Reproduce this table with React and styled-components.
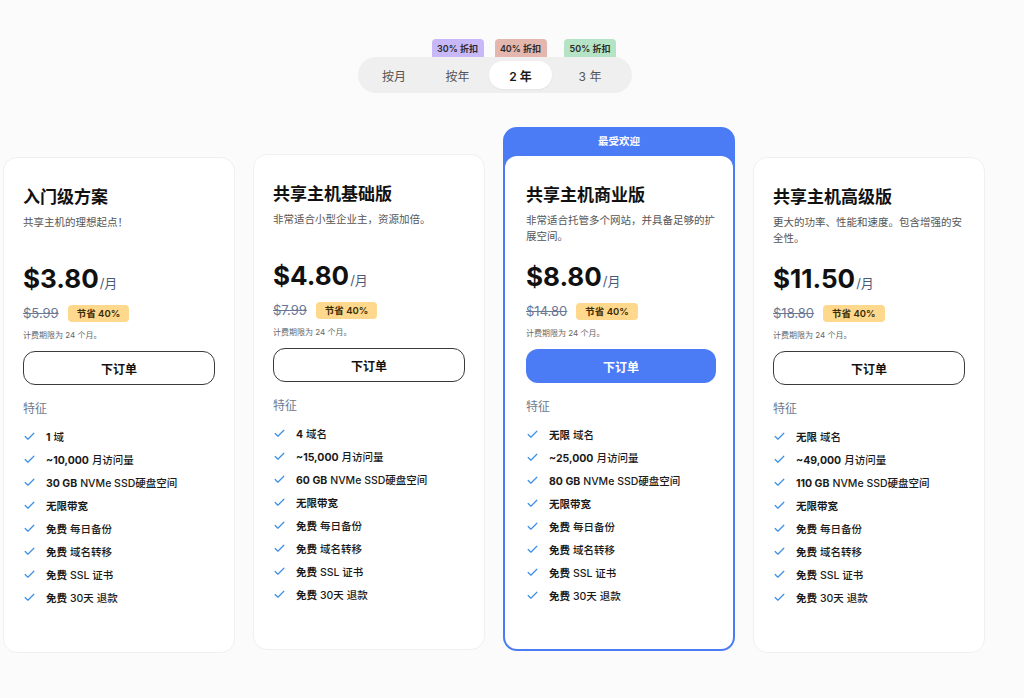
import React from "react";
import styled, { createGlobalStyle } from "styled-components";

const Global = createGlobalStyle`
  html, body { margin: 0; padding: 0; background: #fbfbfb; }
  body { font-family: Inter, "Noto Sans CJK SC", sans-serif; color: #111; }
  * { box-sizing: border-box; }
`;

const Page = styled.div`
  width: 982px;
  margin-left: 3px;
  padding-top: 57px;
  padding-bottom: 45px;
`;

const ToggleWrap = styled.div`
  display: flex;
  justify-content: center;
`;

const Toggle = styled.div`
  display: flex;
  padding: 4px;
  height: 36px;
  border-radius: 18px;
  background: #efefef;
  transform: translateX(1px);
`;

const ToggleItem = styled.div`
  position: relative;
  width: ${(p) => p.$w}px;
  display: flex;
  align-items: center;
  justify-content: center;
  border-radius: 15px;
  font-size: 12px;
  font-weight: ${(p) => (p.$active ? 600 : 400)};
  color: ${(p) => (p.$active ? "#1a1a1a" : "#555")};
  background: ${(p) => (p.$active ? "#fff" : "transparent")};
  box-shadow: ${(p) => (p.$active ? "0 1px 2px rgba(0,0,0,0.05)" : "none")};
`;

const Discount = styled.span`
  position: absolute;
  top: -22px;
  left: 50%;
  transform: translateX(-50%);
  width: 52px;
  height: 18px;
  display: flex;
  align-items: center;
  justify-content: center;
  border-radius: 4px 4px 0 0;
  background: ${(p) => p.$bg};
  font-size: 9px;
  font-weight: 600;
  color: #2b2b2b;
  white-space: nowrap;
`;

const Cards = styled.div`
  display: grid;
  grid-template-columns: repeat(4, 232px);
  gap: 18px;
  margin-top: 34px;
  align-items: start;
`;

const Card = styled.div`
  margin-top: ${(p) => p.$top}px;
  height: 496px;
  background: #fff;
  border: 1px solid #f0f0f0;
  border-radius: 14px;
  padding: 27px 19px;
`;

const Featured = styled.div`
  height: 524px;
  background: #4b7cf6;
  border-radius: 14px;
  padding: 0 2px 2px;
  display: flex;
  flex-direction: column;
`;

const Banner = styled.div`
  height: 29px;
  padding-bottom: 2px;
  display: flex;
  align-items: center;
  justify-content: center;
  color: #fff;
  font-size: 10.5px;
  font-weight: 600;
`;

const Inner = styled.div`
  flex: 1;
  background: #fff;
  border-radius: 12px;
  padding: 27px 17px 27px 21px;
`;

const Title = styled.h2`
  margin: 0;
  font-size: 17px;
  line-height: 24px;
  font-weight: 700;
  color: #111;
`;

const Sub = styled.p`
  margin: 6px 0 0;
  min-height: 32px;
  font-size: 10.5px;
  line-height: 16px;
  color: #555;
`;

const PriceRow = styled.div`
  margin-top: 14px;
  display: flex;
  align-items: baseline;
  height: 36px;
`;

const Price = styled.span`
  font-size: 26px;
  font-weight: 700;
  line-height: 36px;
  color: #111;
`;

const Per = styled.span`
  font-size: 13px;
  color: #4a5b7a;
  margin-left: 1px;
`;

const OldRow = styled.div`
  margin-top: 6px;
  height: 20px;
  display: flex;
  align-items: center;
  gap: 9px;
`;

const Old = styled.span`
  font-size: 13px;
  color: #6b7894;
  text-decoration: line-through;
`;

const Save = styled.span`
  height: 17px;
  padding: 0 9px;
  display: flex;
  align-items: center;
  border-radius: 4px;
  background: #fdd88d;
  font-size: 9.5px;
  font-weight: 600;
  color: #3a2c05;
`;

const Billing = styled.div`
  margin-top: 6px;
  font-size: 8px;
  line-height: 12px;
  color: #666;
`;

const OrderButton = styled.button`
  margin-top: 10px;
  width: 100%;
  height: 34px;
  border-radius: 12px;
  border: ${(p) => (p.$primary ? "none" : "1px solid #3a3a3a")};
  background: ${(p) => (p.$primary ? "#4b7cf6" : "#fff")};
  color: ${(p) => (p.$primary ? "#fff" : "#111")};
  font-family: inherit;
  font-size: 12px;
  font-weight: 600;
`;

const FeatHead = styled.div`
  margin-top: 15px;
  font-size: 12px;
  line-height: 18px;
  color: #6b7a90;
`;

const List = styled.ul`
  list-style: none;
  margin: 7px 0 0;
  padding: 0;
`;

const Item = styled.li`
  height: 23px;
  display: flex;
  align-items: center;
  gap: 10px;
  font-size: 10.5px;
  font-weight: 500;
  color: #1a1a1a;
`;

const B = styled.b`
  font-weight: 700;
  margin-right: 3px;
`;

const Tick = () => (
  <svg width="13" height="13" viewBox="0 0 24 24" fill="none" stroke="#3b8fe6" strokeWidth="2.2" strokeLinecap="round" strokeLinejoin="round">
    <path d="M20 6 9 17l-5-5" />
  </svg>
);

const plans = [
  { title: "入门级方案", sub: "共享主机的理想起点！", price: "$3.80", old: "$5.99", dom: ["1", "域"], visits: "~10,000", disk: "30 GB", top: 30 },
  { title: "共享主机基础版", sub: "非常适合小型企业主，资源加倍。", price: "$4.80", old: "$7.99", dom: ["4", "域名"], visits: "~15,000", disk: "60 GB", top: 27 },
  { title: "共享主机商业版", sub: "非常适合托管多个网站，并具备足够的扩展空间。", price: "$8.80", old: "$14.80", dom: ["无限", "域名"], visits: "~25,000", disk: "80 GB", featured: true },
  { title: "共享主机高级版", sub: "更大的功率、性能和速度。包含增强的安全性。", price: "$11.50", old: "$18.80", dom: ["无限", "域名"], visits: "~49,000", disk: "110 GB", top: 30 },
];

const Body = ({ p }) => (
  <>
    <Title>{p.title}</Title>
    <Sub>{p.sub}</Sub>
    <PriceRow>
      <Price>{p.price}</Price>
      <Per>/月</Per>
    </PriceRow>
    <OldRow>
      <Old>{p.old}</Old>
      <Save>节省 40%</Save>
    </OldRow>
    <Billing>计费期限为 24 个月。</Billing>
    <OrderButton $primary={p.featured}>下订单</OrderButton>
    <FeatHead>特征</FeatHead>
    <List>
      <Item><Tick /><span><B>{p.dom[0]}</B>{p.dom[1]}</span></Item>
      <Item><Tick /><span><B>{p.visits}</B>月访问量</span></Item>
      <Item><Tick /><span><B>{p.disk}</B>NVMe SSD硬盘空间</span></Item>
      <Item><Tick /><span><B>无限带宽</B></span></Item>
      <Item><Tick /><span><B>免费</B>每日备份</span></Item>
      <Item><Tick /><span><B>免费</B>域名转移</span></Item>
      <Item><Tick /><span><B>免费</B>SSL 证书</span></Item>
      <Item><Tick /><span><B>免费</B>30天 退款</span></Item>
    </List>
  </>
);

const periods = [
  { label: "按月", w: 64 },
  { label: "按年", w: 63, badge: "30% 折扣", bg: "#c9b8f7" },
  { label: "2 年", w: 63, badge: "40% 折扣", bg: "#e3b6ae", active: true },
  { label: "3 年", w: 76, badge: "50% 折扣", bg: "#b5e3c5" },
];

export default function App() {
  return (
    <>
      <Global />
      <Page>
        <ToggleWrap>
          <Toggle>
            {periods.map((t) => (
              <ToggleItem key={t.label} $w={t.w} $active={t.active}>
                {t.badge && <Discount $bg={t.bg}>{t.badge}</Discount>}
                {t.label}
              </ToggleItem>
            ))}
          </Toggle>
        </ToggleWrap>
        <Cards>
          {plans.map((p) =>
            p.featured ? (
              <Featured key={p.title}>
                <Banner>最受欢迎</Banner>
                <Inner><Body p={p} /></Inner>
              </Featured>
            ) : (
              <Card key={p.title} $top={p.top}><Body p={p} /></Card>
            )
          )}
        </Cards>
      </Page>
    </>
  );
}
